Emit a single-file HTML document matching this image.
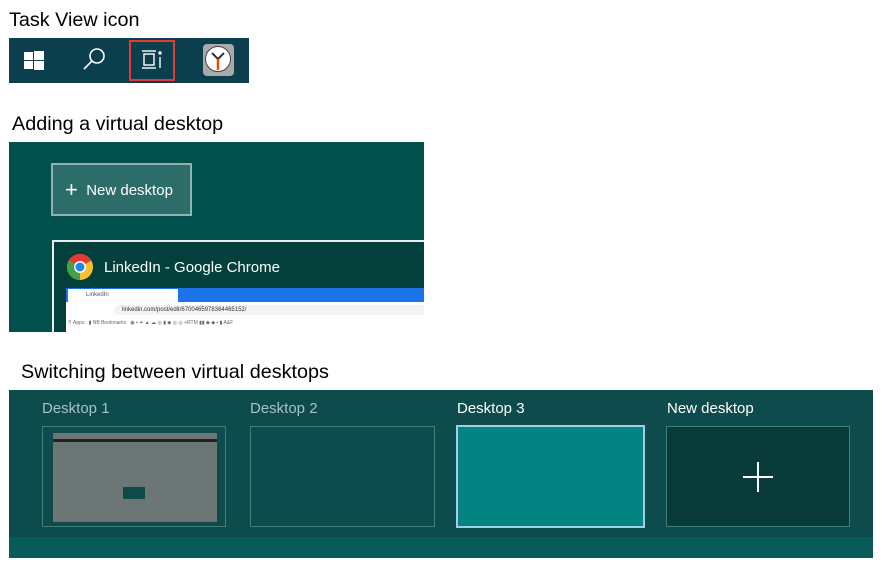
<!DOCTYPE html><html><head><style>
body{margin:0;width:884px;height:569px;background:#fff;position:relative;font-family:"Liberation Sans",sans-serif;overflow:hidden}
.a{position:absolute}
.l{font-size:19.8px;color:#000}
.th{position:absolute;top:426px;width:184px;height:101px;border:1px solid #3f7f7c;box-sizing:border-box}
.dl{position:absolute;top:400px;font-size:15px;color:#a8c2c0}
</style></head><body>
<div class="a l" style="left:9px;top:9px">Task View icon</div>
<div class="a" style="left:9px;top:38px;width:240px;height:45px;background:#0b3f4e"></div>
<svg class="a" style="left:23px;top:50px" width="22" height="22"><rect x="1" y="2" width="9" height="8" fill="#fff"/><rect x="11" y="1" width="10" height="9" fill="#fff"/><rect x="1" y="11" width="9" height="8" fill="#fff"/><rect x="11" y="11" width="10" height="9" fill="#fff"/></svg>
<svg class="a" style="left:82px;top:47px" width="26" height="26" fill="none" stroke="#fff" stroke-width="1.6"><circle cx="15" cy="9" r="7"/><line x1="10" y1="14" x2="2" y2="22"/></svg>
<div class="a" style="left:129px;top:40px;width:46px;height:41px;border:2px solid #e53935;box-sizing:border-box"></div>
<svg class="a" style="left:141px;top:49px" width="24" height="22" fill="none" stroke="#fff" stroke-width="1.4"><line x1="1" y1="2" x2="15" y2="2"/><line x1="1" y1="19" x2="15" y2="19"/><rect x="3" y="5" width="10" height="11"/><line x1="19" y1="8" x2="19" y2="19"/><circle cx="19" cy="4" r="1" fill="#fff"/></svg>
<div class="a" style="left:203px;top:44px;width:31px;height:32px;background:#aaa;border-radius:4px"></div>
<div class="a" style="left:205px;top:46px;width:26px;height:26px;background:#fff;border-radius:50%;border:1px solid #444;box-sizing:border-box"></div>
<svg class="a" style="left:205px;top:46px" width="26" height="26"><path d="M13 13 L7 7 M13 13 L19 7" stroke="#333" stroke-width="2"/><path d="M13 13 L13 24" stroke="#e65100" stroke-width="2.5"/></svg>

<div class="a l" style="left:12px;top:113px">Adding a virtual desktop</div>
<div class="a" style="left:9px;top:142px;width:415px;height:190px;background:#02504b;overflow:hidden">
 <div class="a" style="left:42px;top:21px;width:141px;height:53px;border:2px solid #8fb3b0;background:#2c6d69;box-sizing:border-box;color:#fff;font-size:15px;line-height:49px;padding-left:12px"><span style="font-size:22px;vertical-align:-2px">+</span>&nbsp; New desktop</div>
 <div class="a" style="left:43px;top:98px;width:380px;height:100px;border:2px solid #e8eeee;border-right:none;box-sizing:border-box;background:#03403c">
  <svg class="a" style="left:12px;top:11px" width="28" height="28" viewBox="0 0 28 28"><circle cx="14" cy="14" r="13" fill="#fbc02d"/><path d="M14 14 L2.7 7.5 A13 13 0 0 1 25.3 7.5Z" fill="#e53935"/><path d="M14 14 L2.7 7.5 A13 13 0 0 0 14 27Z" fill="#43a047"/><circle cx="14" cy="14" r="6" fill="#fff"/><circle cx="14" cy="14" r="4.5" fill="#1e88e5"/></svg>
  <div class="a" style="left:50px;top:17px;color:#fff;font-size:15px">LinkedIn - Google Chrome</div>
  <div class="a" style="left:12px;top:46px;width:370px;height:14px;background:#1a73e8"></div>
  <div class="a" style="left:14px;top:47px;width:110px;height:13px;background:#fff;font-size:6px;color:#555;padding-left:18px;box-sizing:border-box;line-height:13px">LinkedIn</div>
  <div class="a" style="left:12px;top:60px;width:370px;height:40px;background:#fff"></div>
  <div class="a" style="left:60px;top:63px;width:320px;height:10px;background:#f1f3f4;border-radius:5px;font-size:6px;color:#333;line-height:10px;padding-left:8px">linkedin.com/post/edit/6700465978364465152/</div>
  <div class="a" style="left:14px;top:78px;font-size:5px;color:#666">⠿ Apps &nbsp; ▮ NB Bookmarks &nbsp; ◉ ▪ ✦ ▲ ☁ ◎ ▮ ◆ ◎ ◎ +RTM ▮▮ ◆ ◆ ▪ ▮ A&amp;F</div>
 </div>
</div>

<div class="a l" style="left:21px;top:361px">Switching between virtual desktops</div>
<div class="a" style="left:9px;top:390px;width:864px;height:168px;background:#0d4b4c"></div>
<div class="a" style="left:9px;top:537px;width:864px;height:21px;background:#075c5a"></div>
<div class="dl" style="left:42px">Desktop 1</div>
<div class="dl" style="left:250px">Desktop 2</div>
<div class="dl" style="left:457px;color:#fff">Desktop 3</div>
<div class="dl" style="left:667px;color:#fff">New desktop</div>
<div class="th" style="left:42px"><div class="a" style="left:10px;top:6px;width:164px;height:89px;background:#6b7675"></div><div class="a" style="left:10px;top:12px;width:164px;height:3px;background:#222"></div><div class="a" style="left:80px;top:60px;width:22px;height:12px;background:#0e4a48"></div></div>
<div class="th" style="left:250px;width:185px"></div>
<div class="th" style="left:456px;width:189px;height:103px;top:425px;border:2px solid #9fd0e0;background:#038381"></div>
<div class="th" style="left:666px;background:#0a3b3b"><svg class="a" style="left:75px;top:34px" width="32" height="32"><path d="M16 1V31M1 16H31" stroke="#fff" stroke-width="2"/></svg></div>
</body></html>
